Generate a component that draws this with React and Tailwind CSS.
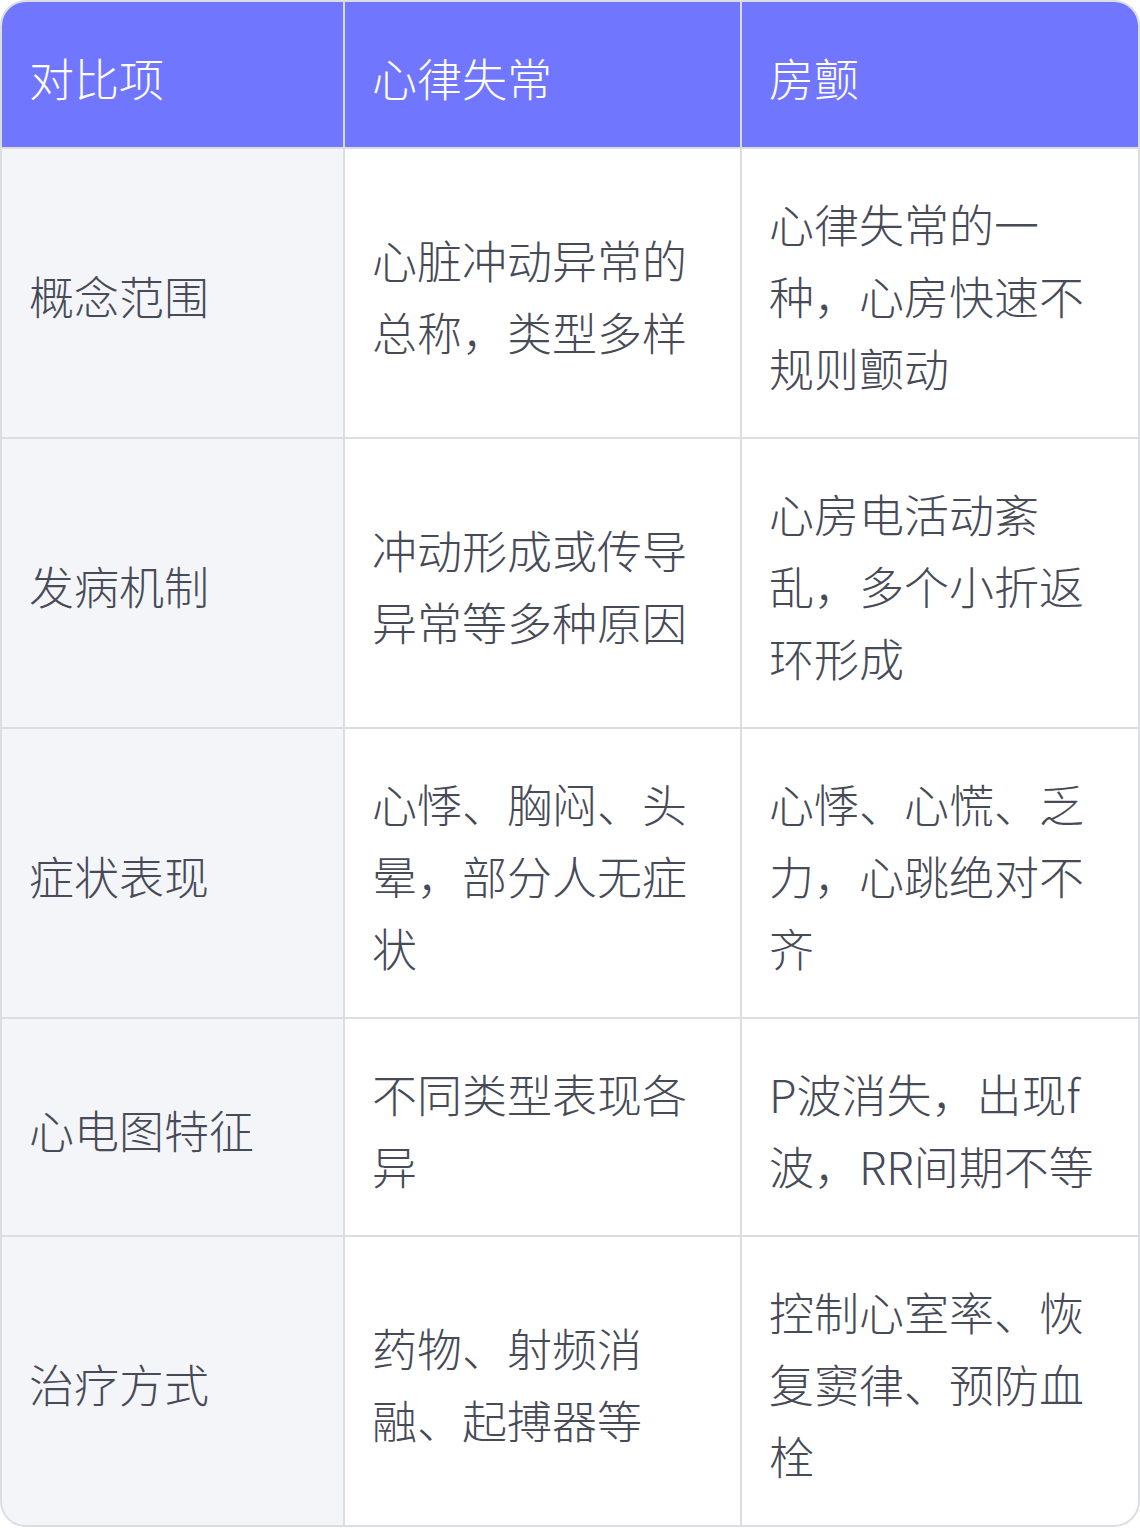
const headers = ['对比项', '心律失常', '房颤'];

const rows = [
  ['概念范围', '心脏冲动异常的总称，类型多样', '心律失常的一种，心房快速不规则颤动'],
  ['发病机制', '冲动形成或传导异常等多种原因', '心房电活动紊乱，多个小折返环形成'],
  ['症状表现', '心悸、胸闷、头晕，部分人无症状', '心悸、心慌、乏力，心跳绝对不齐'],
  ['心电图特征', '不同类型表现各异', 'P波消失，出现f波，RR间期不等'],
  ['治疗方式', '药物、射频消融、起搏器等', '控制心室率、恢复窦律、预防血栓'],
];

export default function App() {
  return (
    <div
      className="w-[1140px] bg-white"
      style={{ fontFamily: '"Noto Sans CJK SC", "Noto Sans", sans-serif' }}
    >
      <div className="rounded-[26px] border-2 border-[#dcdde1] overflow-hidden">
        <div className="grid grid-cols-[341px_395px_396px] gap-[2px] bg-[#dcdde1] text-[45px] leading-[72px] font-light">
          {headers.map((h) => (
            <div key={h} className="bg-[#7176ff] text-white px-[27px] pt-[40px] pb-[33px]">
              {h}
            </div>
          ))}
          {rows.map((row) =>
            row.map((cell, i) => (
              <div
                key={row[0] + i}
                className={`flex items-center px-[27px] pt-[39px] pb-[33px] text-[#474a57] ${
                  i === 0 ? 'bg-[#f4f5f9]' : 'bg-white'
                }`}
              >
                <span>{cell}</span>
              </div>
            ))
          )}
        </div>
      </div>
    </div>
  );
}
